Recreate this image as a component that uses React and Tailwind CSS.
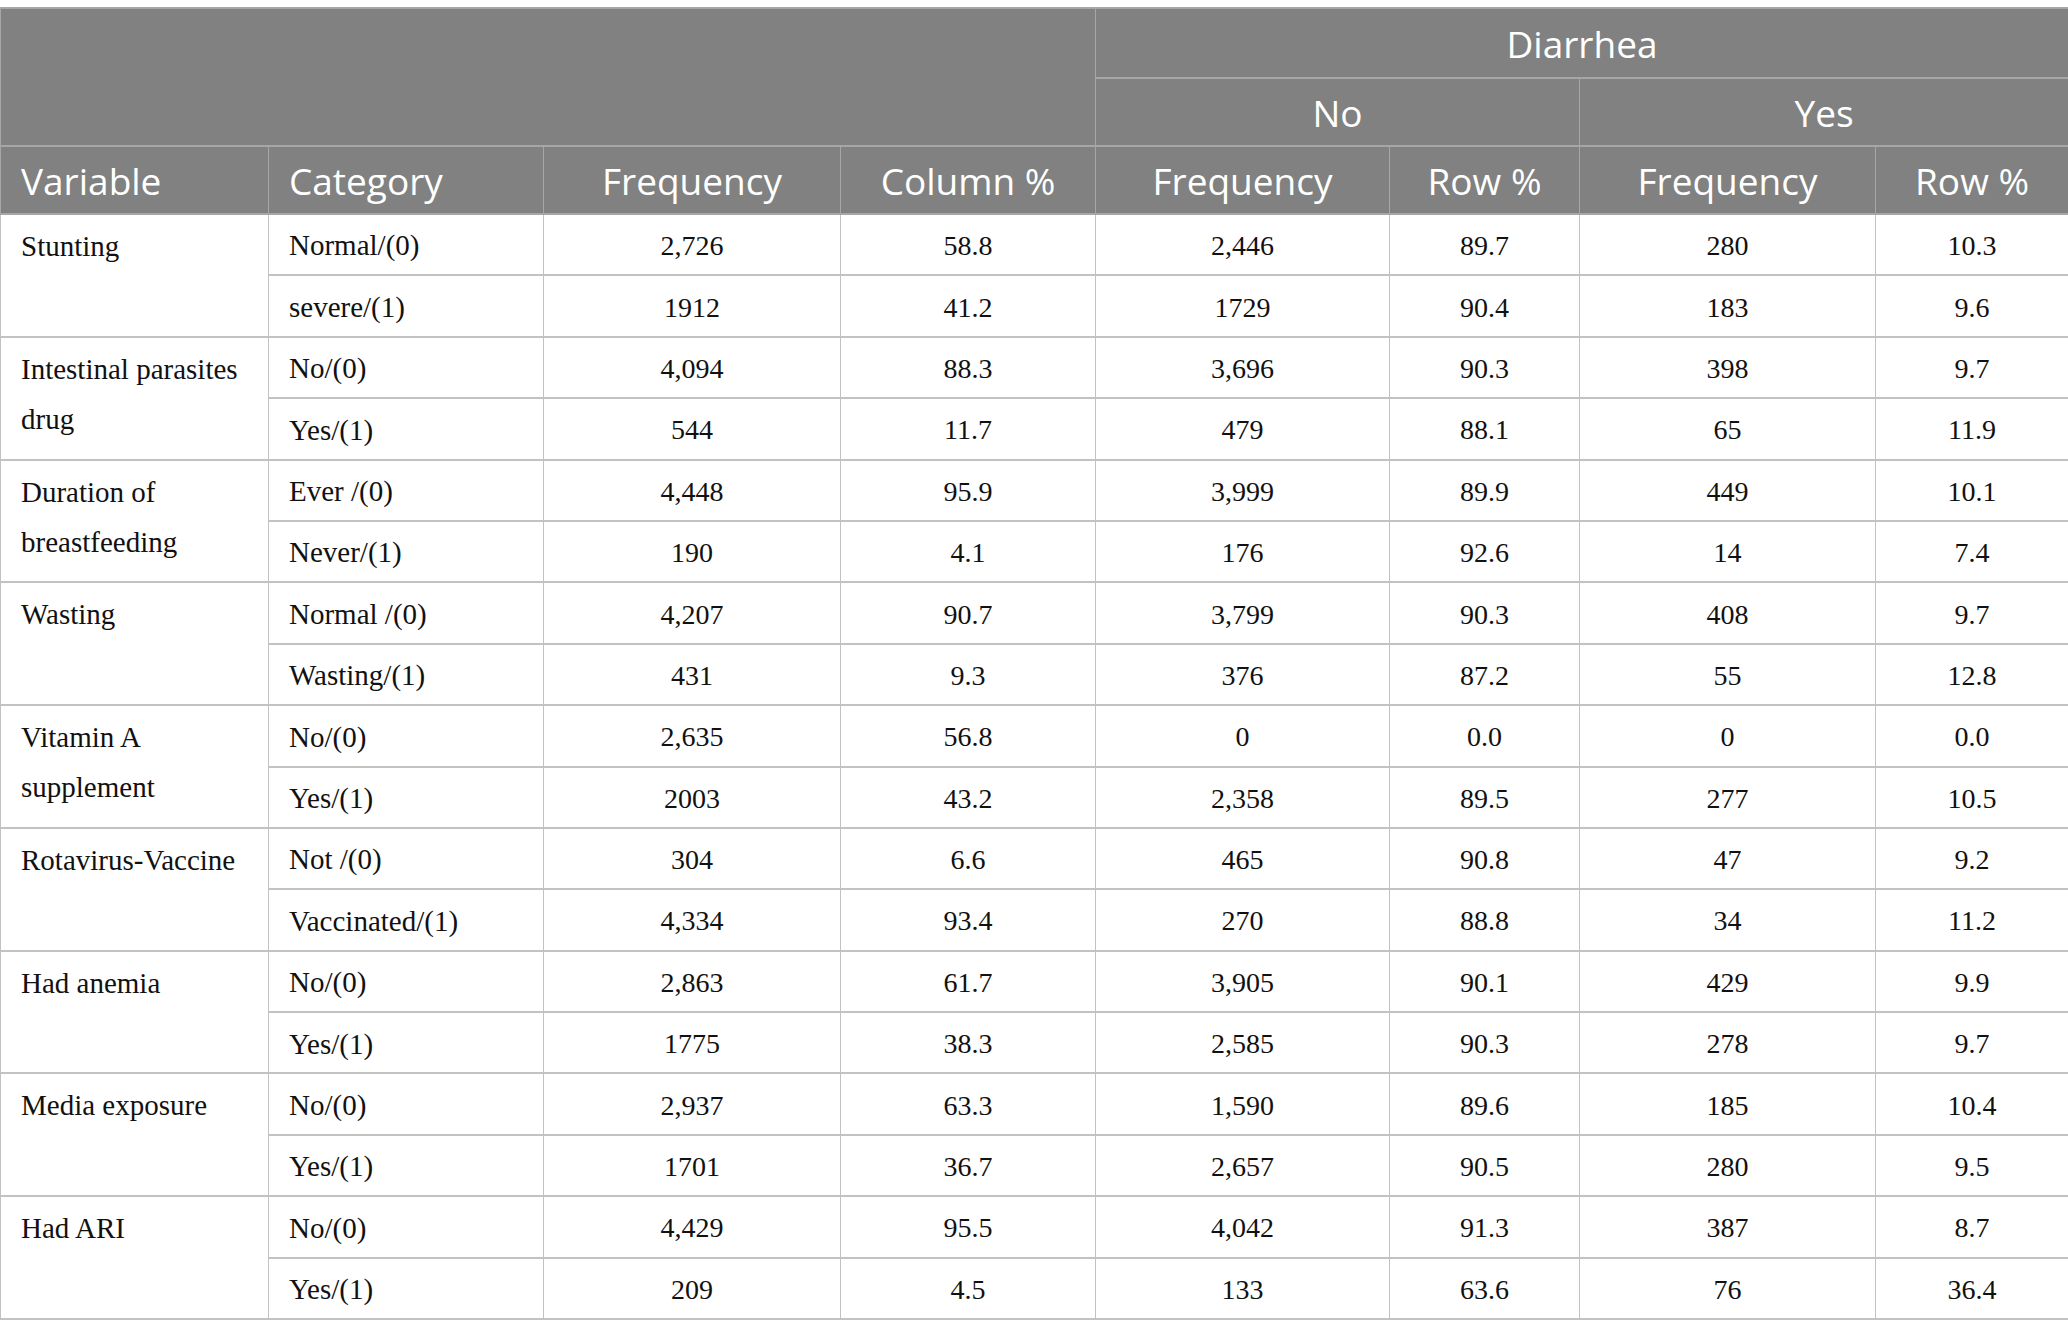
import React from 'react';

const rows = [
  { variable: 'Stunting', items: [
    ['Normal/(0)', '2,726', '58.8', '2,446', '89.7', '280', '10.3'],
    ['severe/(1)', '1912', '41.2', '1729', '90.4', '183', '9.6'],
  ] },
  { variable: 'Intestinal parasites drug', items: [
    ['No/(0)', '4,094', '88.3', '3,696', '90.3', '398', '9.7'],
    ['Yes/(1)', '544', '11.7', '479', '88.1', '65', '11.9'],
  ] },
  { variable: 'Duration of breastfeeding', items: [
    ['Ever /(0)', '4,448', '95.9', '3,999', '89.9', '449', '10.1'],
    ['Never/(1)', '190', '4.1', '176', '92.6', '14', '7.4'],
  ] },
  { variable: 'Wasting', items: [
    ['Normal /(0)', '4,207', '90.7', '3,799', '90.3', '408', '9.7'],
    ['Wasting/(1)', '431', '9.3', '376', '87.2', '55', '12.8'],
  ] },
  { variable: 'Vitamin A supplement', items: [
    ['No/(0)', '2,635', '56.8', '0', '0.0', '0', '0.0'],
    ['Yes/(1)', '2003', '43.2', '2,358', '89.5', '277', '10.5'],
  ] },
  { variable: 'Rotavirus-Vaccine', items: [
    ['Not /(0)', '304', '6.6', '465', '90.8', '47', '9.2'],
    ['Vaccinated/(1)', '4,334', '93.4', '270', '88.8', '34', '11.2'],
  ] },
  { variable: 'Had anemia', items: [
    ['No/(0)', '2,863', '61.7', '3,905', '90.1', '429', '9.9'],
    ['Yes/(1)', '1775', '38.3', '2,585', '90.3', '278', '9.7'],
  ] },
  { variable: 'Media exposure', items: [
    ['No/(0)', '2,937', '63.3', '1,590', '89.6', '185', '10.4'],
    ['Yes/(1)', '1701', '36.7', '2,657', '90.5', '280', '9.5'],
  ] },
  { variable: 'Had ARI', items: [
    ['No/(0)', '4,429', '95.5', '4,042', '91.3', '387', '8.7'],
    ['Yes/(1)', '209', '4.5', '133', '63.6', '76', '36.4'],
  ] },
];

const widths = ['w-[268px]', 'w-[275px]', 'w-[297px]', 'w-[255px]', 'w-[294px]', 'w-[190px]', 'w-[296px]', 'w-[193px]'];

const th = 'border-x border-y-2 border-[#a5a6a5] font-normal pt-[1px]';
const td = 'border-x border-y-2 border-[#c2c2c2] text-center align-middle pt-[3px]';

export default function App() {
  return (
    <div className="bg-white pt-[7px] w-[2068px]">
      <table className="w-[2068px] table-fixed border-collapse text-[#111]">
        <colgroup>
          {widths.map((w, i) => <col key={i} className={w} />)}
        </colgroup>
        <thead className="bg-[#808180] text-white font-['Open_Sans',sans-serif] text-[37px]">
          <tr className="h-[70px]">
            <th colSpan={4} rowSpan={2} className={th}></th>
            <th colSpan={4} className={`${th} text-center`}>Diarrhea</th>
          </tr>
          <tr className="h-[68px]">
            <th colSpan={2} className={`${th} text-center`}>No</th>
            <th colSpan={2} className={`${th} text-center`}>Yes</th>
          </tr>
          <tr className="h-[68px]">
            <th className={`${th} text-left pl-[20px]`}>Variable</th>
            <th className={`${th} text-left pl-[20px]`}>Category</th>
            <th className={`${th} text-center`}>Frequency</th>
            <th className={`${th} text-center`}>Column %</th>
            <th className={`${th} text-center`}>Frequency</th>
            <th className={`${th} text-center`}>Row %</th>
            <th className={`${th} text-center`}>Frequency</th>
            <th className={`${th} text-center`}>Row %</th>
          </tr>
        </thead>
        <tbody className="font-['Liberation_Serif',serif] text-[28px]">
          {rows.map((r) => r.items.map((it, j) => (
            <tr key={r.variable + j} className="h-[61.4px]">
              {j === 0 && (
                <td rowSpan={2} className="border-x border-y-2 border-[#c2c2c2] align-top pl-[20px] pr-2 pt-[6px] leading-[50px] text-[29px]">
                  {r.variable}
                </td>
              )}
              <td className="border-x border-y-2 border-[#c2c2c2] text-left pl-[20px] pt-[3px] text-[29px]">{it[0]}</td>
              {it.slice(1).map((v, k) => (
                <td key={k} className={td}>{v}</td>
              ))}
            </tr>
          )))}
        </tbody>
      </table>
    </div>
  );
}
